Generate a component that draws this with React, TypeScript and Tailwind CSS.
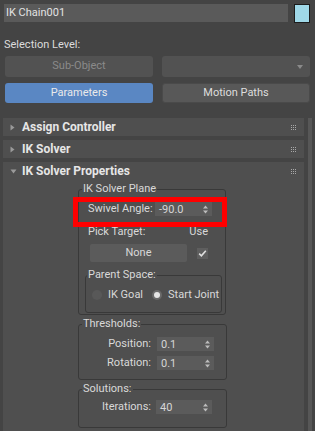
import React from "react";

function TriRight() {
  return (
    <svg width="5" height="7" viewBox="0 0 5 7">
      <path d="M0.5 0.5 L4.5 3.5 L0.5 6.5Z" fill="#9a9a9a" />
    </svg>
  );
}

function TriDown() {
  return (
    <svg width="7" height="5" viewBox="0 0 7 5">
      <path d="M0.5 0.5 L6.5 0.5 L3.5 4.5Z" fill="#9a9a9a" />
    </svg>
  );
}

function Grip() {
  const dots: React.ReactNode[] = [];
  for (let r = 0; r < 3; r++)
    for (let c = 0; c < 3; c++)
      dots.push(
        <rect key={`${r}-${c}`} x={c * 2} y={r * 2} width="1" height="1" fill="#a8a8a8" />
      );
  return (
    <svg width="5" height="5" viewBox="0 0 5 5">
      {dots}
    </svg>
  );
}

function RolloutHeader({ title, open }: { title: string; open?: boolean }) {
  return (
    <div className="h-[18px] shrink-0 bg-[#4f4f4f] flex items-center pl-[7px] pr-[8px]">
      <div className="w-[12px] flex items-center">{open ? <TriDown /> : <TriRight />}</div>
      <span className="font-bold text-[12px] leading-none text-[#e6e6e6]">{title}</span>
      <div className="ml-auto flex items-center">
        <Grip />
      </div>
    </div>
  );
}

function Spinner({ value, w }: { value: string; w: string }) {
  return (
    <div className={`h-[14px] bg-[#5b5b5b] flex items-center pl-[4px] pr-[4px] ${w}`}>
      <span className="text-[11px] leading-none text-[#d6d6d6]">{value}</span>
      <svg className="ml-auto" width="5" height="9" viewBox="0 0 5 9">
        <path d="M2.5 0.5 L5 3.5 L0 3.5Z M0 5.5 L5 5.5 L2.5 8.5Z" fill="#bdbdbd" />
      </svg>
    </div>
  );
}

function Group({
  label,
  labelLeft,
  className,
  children,
}: {
  label: string;
  labelLeft: string;
  className: string;
  children?: React.ReactNode;
}) {
  return (
    <div className={`relative border border-[#393939] rounded-[3px] ${className}`}>
      <span
        className={`absolute -top-[8px] ${labelLeft} px-[1px] bg-[#4f4f4f] leading-[14px] whitespace-nowrap`}
      >
        {label}
      </span>
      {children}
    </div>
  );
}

export default function App() {
  return (
    <div className="w-[315px] h-[431px] overflow-hidden bg-[#444444] [font-family:Roboto,sans-serif] text-[11px] text-[#d9d9d9] select-none">
      {/* name row */}
      <div className="flex pt-[4px] pl-[4px]">
        <div className="w-[284px] h-[18px] bg-[#5a5a5a] flex items-center pl-[2px] text-[11px] text-[#e2e2e2]">
          IK Chain001
        </div>
        <div className="ml-[6px] w-[16px] h-[19px] bg-[#9fd8e8] border border-[#1c1c1c]" />
      </div>

      <div className="mt-[15px] pl-[4px] h-[14px] leading-[14px] text-[#dcdcdc]">Selection Level:</div>

      <div className="mt-[4px] pl-[5px] flex gap-[9px]">
        <div className="w-[148px] h-[21px] bg-[#525252] rounded-[3px] flex items-center justify-center text-[#8a8a8a]">
          Sub-Object
        </div>
        <div className="w-[148px] h-[21px] bg-[#525252] rounded-[3px] flex items-center justify-end pr-[7px]">
          <svg width="6" height="4" viewBox="0 0 6 4">
            <path d="M0 0 L6 0 L3 4Z" fill="#8a8a8a" />
          </svg>
        </div>
      </div>

      <div className="mt-[6px] pl-[5px] flex gap-[9px]">
        <div className="w-[148px] h-[20px] bg-[#5a87c3] rounded-[3px] flex items-center justify-center text-[#eaeaea]">
          Parameters
        </div>
        <div className="w-[148px] h-[20px] bg-[#585858] rounded-[3px] border border-[#4a4a4a] flex items-center justify-center text-[#dedede]">
          Motion Paths
        </div>
      </div>

      {/* rollouts */}
      <div className="mt-[15px] flex h-[314px]">
        <div className="ml-[3px] w-[301px] flex flex-col gap-[4px]">
          <RolloutHeader title="Assign Controller" />
          <RolloutHeader title="IK Solver" />
          <div className="flex-1 bg-[#4f4f4f] flex flex-col">
            <RolloutHeader title="IK Solver Properties" open />
            <div className="pl-[75px] pt-[9px] flex flex-col">
              <Group label="IK Solver Plane" labelLeft="left-[3px]" className="w-[148px] h-[126px]">
                <div className="relative mt-[12px] pl-[9px] h-[14px] flex items-center">
                  <span className="w-[67px] leading-[14px] whitespace-nowrap">Swivel Angle:</span>
                  <Spinner value="-90.0" w="w-[57px]" />
                  <div className="absolute -left-[6px] -top-[5px] w-[154px] h-[30px] border-[5px] border-[#ff0000]" />
                </div>
                <div className="mt-[9px] pl-[9px] pr-[17px] h-[14px] flex items-center leading-[14px]">
                  <span>Pick Target:</span>
                  <span className="ml-auto">Use</span>
                </div>
                <div className="mt-[5px] pl-[11px] flex items-center">
                  <div className="w-[97px] h-[18px] bg-[#5b5b5b] rounded-[2px] flex items-center justify-center text-[#d8d8d8]">
                    None
                  </div>
                  <div className="ml-[10px] w-[11px] h-[11px] bg-[#5e5e5e] flex items-center justify-center">
                    <svg width="9" height="9" viewBox="0 0 9 9">
                      <path d="M1.2 4.6 L3.4 6.8 L7.8 1.8" stroke="#e0e0e0" strokeWidth="1.6" fill="none" />
                    </svg>
                  </div>
                </div>
                <Group label="Parent Space:" labelLeft="left-[1px]" className="mt-[13px] ml-[6px] w-[137px] h-[38px]">
                  <div className="pt-[12px] pl-[6px] h-[14px] flex items-center leading-[14px] box-content">
                    <div className="w-[10px] h-[10px] rounded-full bg-[#585858]" />
                    <span className="ml-[6px]">IK Goal</span>
                    <div className="ml-[9px] w-[10px] h-[10px] rounded-full bg-[#6a6a6a] flex items-center justify-center">
                      <div className="w-[6px] h-[6px] rounded-full bg-[#e6e6e6]" />
                    </div>
                    <span className="ml-[6px]">Start Joint</span>
                  </div>
                </Group>
              </Group>

              <Group label="Thresholds:" labelLeft="left-[3px]" className="mt-[9px] w-[149px] h-[56px]">
                <div className="mt-[12px] h-[14px] flex items-center">
                  <span className="w-[72px] text-right leading-[14px]">Position:</span>
                  <div className="ml-[6px]">
                    <Spinner value="0.1" w="w-[57px]" />
                  </div>
                </div>
                <div className="mt-[5px] h-[14px] flex items-center">
                  <span className="w-[72px] text-right leading-[14px]">Rotation:</span>
                  <div className="ml-[6px]">
                    <Spinner value="0.1" w="w-[57px]" />
                  </div>
                </div>
              </Group>

              <Group label="Solutions:" labelLeft="left-[3px]" className="mt-[9px] w-[149px] h-[39px]">
                <div className="mt-[10px] h-[14px] flex items-center">
                  <span className="w-[72px] text-right leading-[14px]">Iterations:</span>
                  <div className="ml-[5px]">
                    <Spinner value="40" w="w-[56px]" />
                  </div>
                </div>
              </Group>
            </div>
          </div>
        </div>
        <div className="ml-[4px] w-[4px] bg-[#575757]" />
      </div>
    </div>
  );
}
